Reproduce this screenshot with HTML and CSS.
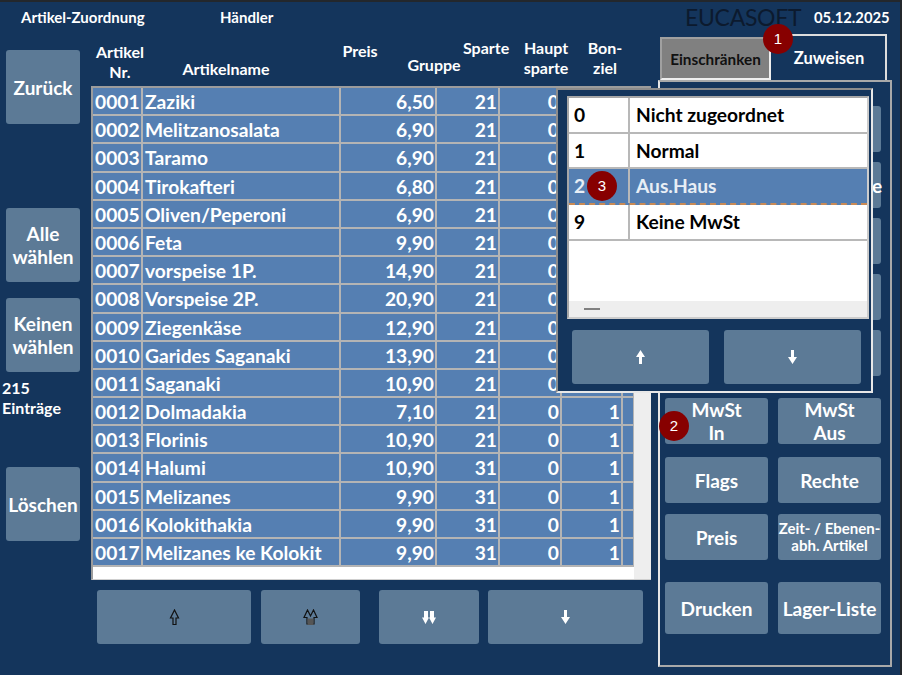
FILE: index.html
```html
<!DOCTYPE html>
<html lang="de">
<head>
<meta charset="utf-8">
<title>Artikel-Zuordnung</title>
<link rel="stylesheet" href="styles.css">
</head>
<body>
<div class="app">
  <header class="topbar">
    <span class="title">Artikel-Zuordnung</span>
    <span class="dealer">Händler</span>
    <span class="brand">EUCASOFT</span>
    <span class="date">05.12.2025</span>
  </header>
  <div class="main">
    <aside class="side">
      <button class="btn side-btn zurueck">Zurück</button>
      <button class="btn side-btn alle">Alle<br>wählen</button>
      <button class="btn side-btn keinen">Keinen<br>wählen</button>
      <div class="count">215<br>Einträge</div>
      <button class="btn side-btn loeschen">Löschen</button>
    </aside>
    <section class="center">
      <div class="heads">
        <div class="h h-nr">Artikel<br>Nr.</div>
        <div class="h h-name">Artikelname</div>
        <div class="h h-preis">Preis</div>
        <div class="h h-gruppe">Gruppe</div>
        <div class="h h-sparte">Sparte</div>
        <div class="h h-haupt">Haupt<br>sparte</div>
        <div class="h h-bon">Bon-<br>ziel</div>
      </div>
      <div class="table">
        <div class="rows">
          <div class="row"><div>0001</div><div>Zaziki</div><div class="n">6,50</div><div class="n">21</div><div class="n">0</div><div class="n">1</div><div></div></div>
          <div class="row"><div>0002</div><div>Melitzanosalata</div><div class="n">6,90</div><div class="n">21</div><div class="n">0</div><div class="n">1</div><div></div></div>
          <div class="row"><div>0003</div><div>Taramo</div><div class="n">6,90</div><div class="n">21</div><div class="n">0</div><div class="n">1</div><div></div></div>
          <div class="row"><div>0004</div><div>Tirokafteri</div><div class="n">6,80</div><div class="n">21</div><div class="n">0</div><div class="n">1</div><div></div></div>
          <div class="row"><div>0005</div><div>Oliven/Peperoni</div><div class="n">6,90</div><div class="n">21</div><div class="n">0</div><div class="n">1</div><div></div></div>
          <div class="row"><div>0006</div><div>Feta</div><div class="n">9,90</div><div class="n">21</div><div class="n">0</div><div class="n">1</div><div></div></div>
          <div class="row"><div>0007</div><div>vorspeise 1P.</div><div class="n">14,90</div><div class="n">21</div><div class="n">0</div><div class="n">1</div><div></div></div>
          <div class="row"><div>0008</div><div>Vorspeise 2P.</div><div class="n">20,90</div><div class="n">21</div><div class="n">0</div><div class="n">1</div><div></div></div>
          <div class="row"><div>0009</div><div>Ziegenkäse</div><div class="n">12,90</div><div class="n">21</div><div class="n">0</div><div class="n">1</div><div></div></div>
          <div class="row"><div>0010</div><div>Garides Saganaki</div><div class="n">13,90</div><div class="n">21</div><div class="n">0</div><div class="n">1</div><div></div></div>
          <div class="row"><div>0011</div><div>Saganaki</div><div class="n">10,90</div><div class="n">21</div><div class="n">0</div><div class="n">1</div><div></div></div>
          <div class="row"><div>0012</div><div>Dolmadakia</div><div class="n">7,10</div><div class="n">21</div><div class="n">0</div><div class="n">1</div><div></div></div>
          <div class="row"><div>0013</div><div>Florinis</div><div class="n">10,90</div><div class="n">21</div><div class="n">0</div><div class="n">1</div><div></div></div>
          <div class="row"><div>0014</div><div>Halumi</div><div class="n">10,90</div><div class="n">31</div><div class="n">0</div><div class="n">1</div><div></div></div>
          <div class="row"><div>0015</div><div>Melizanes</div><div class="n">9,90</div><div class="n">31</div><div class="n">0</div><div class="n">1</div><div></div></div>
          <div class="row"><div>0016</div><div>Kolokithakia</div><div class="n">9,90</div><div class="n">31</div><div class="n">0</div><div class="n">1</div><div></div></div>
          <div class="row"><div>0017</div><div>Melizanes ke Kolokit</div><div class="n">9,90</div><div class="n">31</div><div class="n">0</div><div class="n">1</div><div></div></div>
        </div>
        <div class="vscroll"></div>
      </div>
      <div class="pager">
        <button class="btn pg pg-1"><svg width="11" height="17" viewBox="0 0 11 17"><path d="M5.500 1 1.500 9h2.500v6.500h3V9h2.500z" fill="#5c7a96" stroke="#111" stroke-width="1.200"/></svg></button>
        <button class="btn pg pg-2"><svg width="15" height="17" viewBox="0 0 15 17"><path d="M4.500 1 1 8.500h3V15h7V8.500h3L10.500 1 7.500 7 4.500 1z" fill="#5c7a96" stroke="#111" stroke-width="1.200"/><path d="M4.500 9.500h6V16h-6z" fill="#555"/></svg></button>
        <button class="btn pg pg-3"><svg width="14" height="15" viewBox="0 0 14 15"><path d="M2 1h4v6.500h1L3.500 14 0 7.500h2zM8 1h4v6.500h2L10.500 14 7 7.500h1z" fill="#fff"/></svg></button>
        <button class="btn pg pg-4"><svg width="9" height="14" viewBox="0 0 9 14"><path d="M3 0h3v7h3l-4.500 7L0 7h3z" fill="#fff"/></svg></button>
      </div>
    </section>
    <section class="right">
      <div class="tabs">
        <div class="tab tab-off">Einschränken</div>
        <div class="tab tab-on">Zuweisen</div>
      </div>
      <div class="panel">
        <div class="prow p-first"><button class="btn pb"></button><button class="btn pb"></button></div>
        <div class="prow p-std"><button class="btn pb"></button><button class="btn pb over">Hauptsparte</button></div>
        <div class="prow p-std"><button class="btn pb"></button><button class="btn pb"></button></div>
        <div class="prow p-std"><button class="btn pb"></button><button class="btn pb"></button></div>
        <div class="prow p-std"><button class="btn pb"></button><button class="btn pb"></button></div>
        <div class="prow p-mwst"><button class="btn pb">MwSt<br>In</button><button class="btn pb">MwSt<br>Aus</button></div>
        <div class="prow p-flags"><button class="btn pb">Flags</button><button class="btn pb">Rechte</button></div>
        <div class="prow p-preis"><button class="btn pb">Preis</button><button class="btn pb small">Zeit- / Ebenen-<br>abh. Artikel</button></div>
        <div class="prow p-druck"><button class="btn pb tall">Drucken</button><button class="btn pb tall">Lager-Liste</button></div>
      </div>
    </section>
  </div>

  <div class="popup">
    <div class="plist">
      <div class="prow2"><div>0</div><div>Nicht zugeordnet</div></div>
      <div class="prow2"><div>1</div><div>Normal</div></div>
      <div class="prow2 sel"><div>2</div><div>Aus.Haus</div></div>
      <div class="prow2"><div>9</div><div>Keine MwSt</div></div>
      <div class="pscroll"><span class="dash"></span></div>
    </div>
    <div class="pbtns">
      <button class="btn pop-btn"><svg width="9" height="14" viewBox="0 0 9 14"><path d="M4.500 0 9 7H6v7H3V7H0z" fill="#fff"/></svg></button>
      <button class="btn pop-btn"><svg width="9" height="14" viewBox="0 0 9 14"><path d="M3 0h3v7h3l-4.500 7L0 7h3z" fill="#fff"/></svg></button>
    </div>
  </div>

  <span class="badge b1">1</span>
  <span class="badge b2">2</span>
  <span class="badge b3">3</span>
</div>
</body>
</html>
```
FILE: styles.css
```css
* { box-sizing: border-box; }
html, body { margin: 0; padding: 0; }
body { background: #14355c; font-family: "Lato", "Liberation Sans", sans-serif; font-weight: 700; color: #fff; }
.app { position: relative; width: 902px; height: 675px; overflow: hidden; background: #14355c; border-top: 2px solid #23272c; border-right: 2px solid #23272c; }

.topbar { display: flex; align-items: center; height: 30px; font-size: 15px; }
.title { margin-left: 21px; width: 199px; }
.dealer { width: 465px; }
.brand { width: 129px; font-weight: 400; font-size: 23px; color: #0c1a2e; letter-spacing: -0.3px; }
.date { font-size: 14.800px; }

.main { display: flex; height: 643px; }

.btn { display: flex; flex-direction: column; align-items: center; justify-content: center; border: 0; padding: 0; margin: 0; background: #5c7a96; border-radius: 3px; color: #fff; font-family: inherit; font-weight: 700; font-size: 19px; line-height: 23px; text-align: center; }

.side { width: 91px; flex: none; padding-left: 6px; padding-top: 18px; display: flex; flex-direction: column; }
.side-btn { width: 74px; height: 74px; }
.alle { margin-top: 84px; }
.keinen { margin-top: 16px; }
.count { margin-top: 6px; margin-left: -4px; font-size: 16px; line-height: 20px; height: 42px; }
.loeschen { margin-top: 47px; }

.center { width: 567px; flex: none; }
.heads { display: flex; height: 54px; font-size: 16px; line-height: 20px; text-align: center; }
.h { flex: none; white-space: nowrap; }
.h-nr { width: 58px; margin-top: 10px; }
.h-name { width: 110px; margin-left: 22px; margin-top: 27px; }
.h-preis { width: 44px; margin-left: 57px; margin-top: 9px; }
.h-gruppe { width: 58px; margin-left: 23px; margin-top: 23px; }
.h-sparte { width: 46px; margin-top: 6px; }
.h-haupt { width: 46px; margin-left: 14px; margin-top: 6px; overflow: hidden; height: 42px; }
.h-bon { width: 40px; margin-left: 16px; margin-top: 6px; }

.table { width: 560px; height: 494px; background: #fff; border-top: 2px solid #9c9c9c; border-left: 2px solid #9c9c9c; border-bottom: 1px solid #cfcfcf; display: flex; }
.rows { width: 541px; flex: none; display: flex; flex-direction: column; }
.row { display: grid; grid-template-columns: 48px 196px 94px 61px 60px 59px 10px; column-gap: 2px; height: 28.200px; padding-bottom: 2px; background: #b4b4b4; font-size: 19.200px; line-height: 27px; white-space: nowrap; }
.row > div { background: #557fb2; padding-left: 2px; overflow: hidden; }
.row > .n { text-align: right; padding: 0 1px 0 0; }
.vscroll { flex: 1; background: #eeeeee; }

.pager { display: flex; margin-top: 10px; margin-left: 6px; }
.pg { height: 54px; }
.pg-1 { width: 154px; }
.pg-2 { width: 99px; margin-left: 10px; }
.pg-3 { width: 100px; margin-left: 19px; }
.pg-4 { width: 155px; margin-left: 9px; }

.right { width: 242px; flex: none; }
.tabs { display: flex; height: 48px; align-items: flex-end; padding-left: 2px; font-size: 15.300px; }
.tab { display: flex; align-items: center; justify-content: center; }
.tab-off { width: 111px; height: 43px; background: #808080; color: #111; border: 2px solid #a0a0a0; border-right-color: #eee; border-bottom-color: #eee; }
.tab-on { width: 116px; height: 46px; padding-left: 2px; font-size: 16.500px; border-top: 2px solid #ddd; border-right: 2px solid #ddd; }
.panel { width: 234px; height: 587px; padding: 0 0 0 5px; border: 2px solid #a9a9a9; border-left-color: #e6e6e6; }
.prow { display: flex; gap: 10px; }
.pb { width: 103px; height: 46px; }
.over { white-space: nowrap; overflow: visible; }
.small { font-size: 15px; line-height: 17px; white-space: nowrap; }
.tall { height: 52px; }
.p-first { margin-top: 24px; }
.p-std { margin-top: 10px; }
.p-mwst { margin-top: 22px; }
.p-flags { margin-top: 13px; }
.p-preis { margin-top: 11px; }
.p-druck { margin-top: 22px; }

/* Overlay popup */
.popup { position: absolute; left: 556px; top: 86px; width: 317px; height: 305px; background: #14355c; border: 2px solid #8c8c8c; border-right-color: #e8e8e8; border-bottom-color: #e8e8e8; padding: 6px 0 0 9px; }
.plist { width: 302px; height: 223px; background: #fff; border: 2px solid #a6a6a6; border-right-color: #ccc; border-bottom-color: #ccc; display: flex; flex-direction: column; color: #000; font-size: 19.200px; }
.prow2 { display: grid; grid-template-columns: 61px 1fr; height: 35.700px; flex: none; border-bottom: 2px solid #b8b8b8; line-height: 34px; }
.prow2 > div { padding-left: 5px; }
.prow2 > div:first-child { border-right: 2px solid #b8b8b8; }
.prow2 > div:last-child { padding-left: 6px; }
.prow2.sel { background: #557fb2; color: #e8eef5; border-bottom: 2px dashed #c98a55; }
.pscroll { margin-top: auto; height: 16px; background: #eeeeee; display: flex; align-items: center; padding-left: 15px; }
.dash { width: 16px; height: 2px; background: #808080; }
.pbtns { display: flex; gap: 15px; margin-top: 11px; margin-left: 5px; }
.pop-btn { width: 137px; height: 54px; }

.badge { position: absolute; width: 30px; height: 30px; border-radius: 50%; background: #870000; color: #fff; font-family: "Liberation Sans", sans-serif; font-weight: 400; font-size: 15px; line-height: 30px; text-align: center; }
.b1 { left: 763px; top: 22px; }
.b2 { left: 659px; top: 409px; }
.b3 { left: 587px; top: 169px; }
```
